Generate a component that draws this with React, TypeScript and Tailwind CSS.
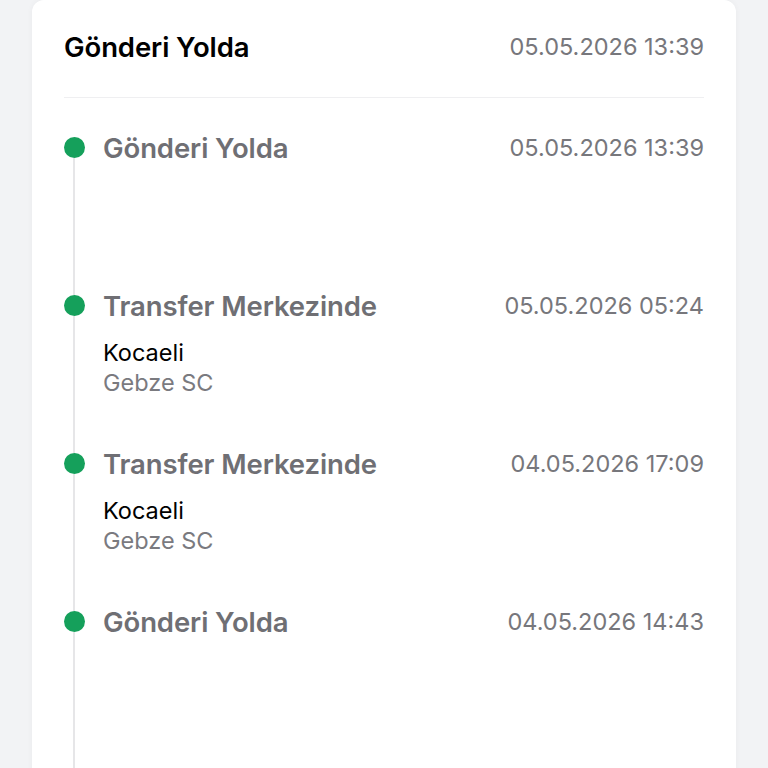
import React from "react";

type Event = {
  title: string;
  date: string;
  city?: string;
  branch?: string;
};

const events: Event[] = [
  { title: "Gönderi Yolda", date: "05.05.2026 13:39" },
  { title: "Transfer Merkezinde", date: "05.05.2026 05:24", city: "Kocaeli", branch: "Gebze SC" },
  { title: "Transfer Merkezinde", date: "04.05.2026 17:09", city: "Kocaeli", branch: "Gebze SC" },
  { title: "Gönderi Yolda", date: "04.05.2026 14:43" },
  { title: "Transfer Merkezinde", date: "04.05.2026 11:02", city: "Kocaeli", branch: "Gebze SC" },
];

function TimelineItem({ event }: { event: Event }) {
  return (
    <div className="flex h-[158px] shrink-0">
      {/* dot + connecting line */}
      <div className="flex w-[20px] flex-col items-center">
        <div className="h-[21px] w-[21px] shrink-0 rounded-full bg-[#15a05b]" />
        <div className="w-[2px] flex-1 bg-[#e6e6e8]" />
      </div>
      <div className="ml-[19px] flex-1">
        <div className="flex items-center justify-between leading-[22px]">
          <span className="text-[27.5px] font-semibold tracking-[-0.1px] text-[#6f6f74]">{event.title}</span>
          <span className="text-[23.5px] text-[#77777c]">{event.date}</span>
        </div>
        {event.city && (
          <div className="mt-[21px] text-[23.5px] leading-[30px]">
            <div className="text-black">{event.city}</div>
            <div className="text-[#7a7a7f]">{event.branch}</div>
          </div>
        )}
      </div>
    </div>
  );
}

export default function App() {
  return (
    <div
      className="h-[768px] w-[768px] overflow-hidden bg-[#f2f3f5] px-8"
      style={{ fontFamily: "Inter, 'Noto Sans', sans-serif" }}
    >
      <div className="h-[800px] rounded-xl bg-white px-8 shadow-[0_0_6px_rgba(0,0,0,0.04)]">
        <div className="flex items-center justify-between pb-[34px] pt-[31px] leading-[32px]">
          <h1 className="text-[27.5px] font-semibold tracking-[-0.1px] text-black">Gönderi Yolda</h1>
          <span className="text-[23.5px] text-[#77777c]">05.05.2026 13:39</span>
        </div>
        <div className="h-px bg-[#efeff1]" />
        <div className="flex flex-col pt-[39px]">
          {events.map((e, i) => (
            <TimelineItem key={i} event={e} />
          ))}
        </div>
      </div>
    </div>
  );
}
